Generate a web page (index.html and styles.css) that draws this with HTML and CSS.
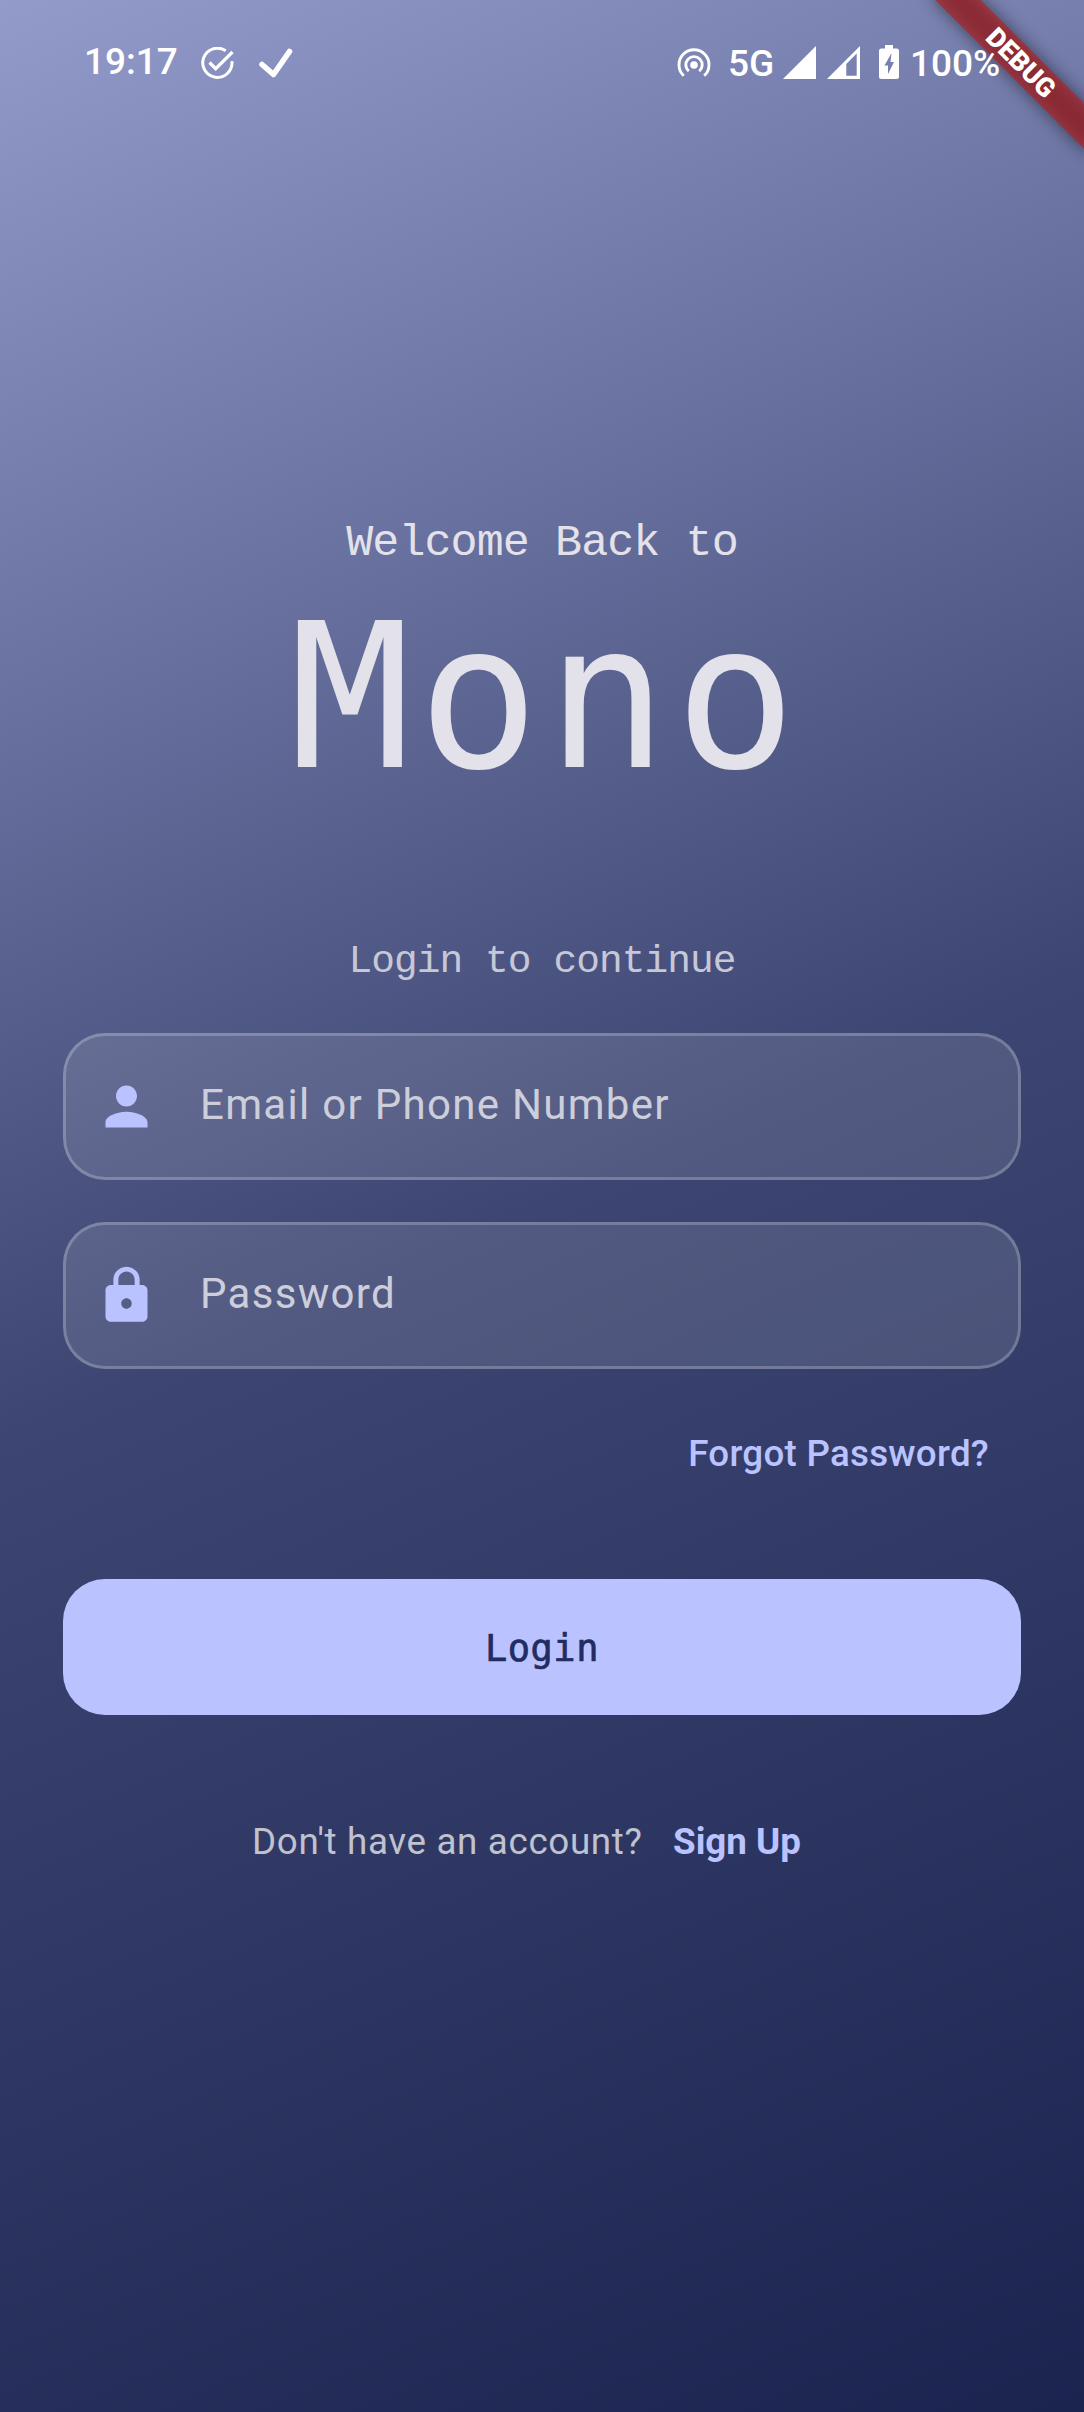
FILE: index.html
```html
<!DOCTYPE html>
<html lang="en">
<head>
<meta charset="utf-8">
<title>Mono</title>
<link rel="stylesheet" href="styles.css">
</head>
<body>
<div class="screen">
  <header class="status">
    <div class="status-group">
      <span class="time">19:17</span>
      <svg class="icon-task" viewBox="0 0 33 33" fill="none" stroke="#fff" stroke-width="3"><path d="M24.7 3.8A14.6 14.6 0 1 0 30.9 14.2"/><path d="M8.5 15.5l6.2 6.2L31.5 5" stroke-width="3.2"/></svg>
      <svg class="icon-check" viewBox="0 0 34 30" fill="none" stroke="#fff" stroke-width="5.6" stroke-linecap="round" stroke-linejoin="round"><path d="M3 16.5l11.5 10L30.5 3.5"/></svg>
    </div>
    <div class="status-group">
      <svg class="icon-hotspot" viewBox="0 0 34 29" fill="none" stroke="#fff" stroke-width="2.9"><circle cx="17" cy="17" r="3.8" fill="#fff" stroke="none"/><path d="M11.8 23.2a8.2 8.2 0 1 1 10.4 0"/><path d="M6.8 27.8A15 15 0 1 1 27.2 27.8"/></svg>
      <span class="network">5G</span>
      <svg class="icon-signal" viewBox="0 0 33 33"><path d="M0 33L33 0V33z" fill="#fff"/></svg>
      <svg class="icon-signal second" viewBox="0 0 33 33"><path d="M0 33L33 0V33zM19.3 18V29.7H29.7V7.6z" fill="#fff" fill-rule="evenodd"/></svg>
      <svg class="icon-battery" viewBox="0 0 20 34"><path d="M6 0h8v3.5h3.5A2.5 2.5 0 0 1 20 6v25.500a2.500 2.500 0 0 1-2.500 2.500h-15A2.500 2.500 0 0 1 0 31.500V6a2.500 2.500 0 0 1 2.500-2.500H6zM12.500 8L5.500 20.500h3.500V29l6-12h-3.500z" fill="#fff" fill-rule="evenodd"/></svg>
      <span class="charge">100%</span>
    </div>
  </header>

  <main class="login">
    <p class="welcome">Welcome Back to</p>
    <h1 class="brand">Mono</h1>
    <p class="hint">Login to continue</p>
    <div class="fields">
      <div class="field">
        <svg class="field-icon" viewBox="0 0 24 24"><path d="M12 12c2.210 0 4-1.790 4-4s-1.790-4-4-4-4 1.790-4 4 1.790 4 4 4zm0 2c-2.670 0-8 1.340-8 4v2h16v-2c0-2.660-5.330-4-8-4z"/></svg>
        <span class="placeholder">Email or Phone Number</span>
      </div>
      <div class="field">
        <svg class="field-icon" viewBox="0 0 24 24"><path d="M18 8h-1V6c0-2.760-2.240-5-5-5S7 3.240 7 6v2H6c-1.100 0-2 .9-2 2v10c0 1.100.9 2 2 2h12c1.100 0 2-.9 2-2V10c0-1.100-.9-2-2-2zm-6 9c-1.100 0-2-.9-2-2s.9-2 2-2 2 .9 2 2-.9 2-2 2zm3.100-9H8.900V6c0-1.710 1.390-3.100 3.100-3.100s3.100 1.390 3.100 3.100v2z"/></svg>
        <span class="placeholder">Password</span>
      </div>
    </div>
    <a class="forgot">Forgot Password?</a>
    <button class="submit" type="button">Login</button>
    <p class="signup"><span class="question">Don't have an account?</span><a class="signup-link">Sign Up</a></p>
  </main>

  <div class="ribbon"><span>DEBUG</span></div>
</div>
</body>
</html>
```
FILE: styles.css
```css
* { box-sizing: border-box; }
body { margin: 0; }
p, h1 { margin: 0; font-weight: 400; white-space: nowrap; }

.screen {
  position: relative;
  width: 1084px;
  height: 2412px;
  overflow: hidden;
  font-family: Roboto, sans-serif;
  color: #e3e1e9;
  background: linear-gradient(156.5deg, #939bcb 0%, #3d4672 50%, #1b244f 100%);
}

.status {
  position: relative;
  z-index: 2;
  display: flex;
  justify-content: space-between;
  height: 126px;
  padding: 0 85px 0 84px;
  color: #fff;
  font-size: 37px;
  font-weight: 500;
  line-height: 44px;
}
.status-group { display: flex; align-items: flex-start; }
.status-group svg { display: block; flex: none; }
.time { margin-top: 40px; width: 94px; }
.icon-task { width: 33px; height: 33px; margin: 47px 0 0 23px; }
.icon-check { width: 34px; height: 30px; margin: 48px 0 0 25px; }
.icon-hotspot { width: 34px; height: 29px; margin: 48px 17px 0 0; }
.network { margin-top: 42px; width: 55px; }
.icon-signal { width: 33px; height: 33px; margin-top: 46px; }
.icon-signal.second { margin-left: 11px; }
.icon-battery { width: 20px; height: 34px; margin: 45px 11px 0 19px; }
.charge { margin-top: 42px; width: 89px; }

.login { display: flex; flex-direction: column; padding: 0 63px; }
.welcome, .hint {
  text-align: center;
  font-family: "Liberation Mono", monospace;
}
.welcome { margin-top: 388px; height: 60px; line-height: 60px; font-size: 45px; letter-spacing: -0.9px; }
.brand {
  height: 260px;
  margin-top: -7px;
  padding-left: 9px;
  line-height: 260px;
  text-align: center;
  font-family: "DejaVu Sans Mono", monospace;
  font-size: 201px;
  letter-spacing: 7.500px;
}
.hint { margin-top: 107px; height: 56px; line-height: 56px; font-size: 39.500px; letter-spacing: -0.93px; color: #c6c8d7; }

.fields { display: flex; flex-direction: column; gap: 42px; margin-top: 43px; }
.field {
  display: flex;
  align-items: center;
  height: 147px;
  padding-left: 29px;
  border: 3px solid rgba(255, 255, 255, 0.22);
  border-radius: 42px;
  background: rgba(255, 255, 255, 0.11);
  font-size: 42px;
  letter-spacing: 1.300px;
  color: #cdcedb;
}
.field-icon { width: 63px; height: 63px; margin-right: 42px; fill: #bac3ff; }
.placeholder { padding-bottom: 4px; }

.forgot {
  align-self: flex-end;
  margin: 62px 32px 0 0;
  height: 46px;
  line-height: 46px;
  font-size: 36.750px;
  font-weight: 500;
  letter-spacing: 0.260px;
  color: #bac3ff;
}
.submit {
  height: 136px;
  margin-top: 102px;
  padding: 2px 0 0;
  border: 0;
  border-radius: 42px;
  background: #bac3ff;
  color: #212c61;
  font-family: "DejaVu Sans Mono", monospace;
  font-size: 37px;
  letter-spacing: 0.500px;
  -webkit-text-stroke: 0.700px #212c61;
}
.signup { display: flex; margin: 104px 0 0 189px; height: 46px; line-height: 46px; font-size: 36.750px; }
.question { width: 421px; color: #c0c2cf; letter-spacing: 0.660px; }
.signup-link { font-weight: 700; color: #bac3ff; }

.ribbon {
  position: absolute;
  z-index: 1;
  left: 911px;
  top: 47px;
  width: 220px;
  height: 31.500px;
  transform: rotate(45deg);
  text-align: center;
  color: #fff;
  font-size: 26.800px;
  font-weight: 900;
  line-height: 32px;
}
.ribbon::before, .ribbon::after { content: ""; position: absolute; inset: 0; z-index: -2; }
.ribbon::before { background: rgba(0, 0, 0, 0.5); filter: blur(9px); }
.ribbon::after { background: rgba(183, 28, 28, 0.63); z-index: -1; }
```
